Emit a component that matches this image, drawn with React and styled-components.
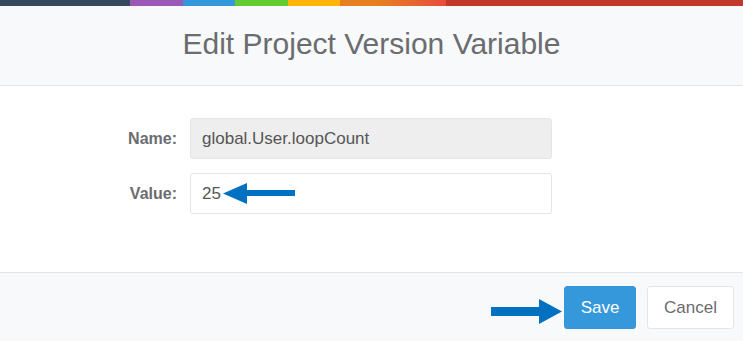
import React from "react";
import styled, { createGlobalStyle } from "styled-components";

const Global = createGlobalStyle`
  html, body { margin: 0; padding: 0; background: #fff; }
  body { font-family: "Liberation Sans", Arial, sans-serif; }
`;

const Page = styled.div`
  width: 743px;
  height: 341px;
  display: flex;
  flex-direction: column;
  overflow: hidden;
`;

const ColorLine = styled.div`
  height: 6px;
  flex: none;
  background: linear-gradient(to right,
    #34495e 0px, #34495e 130px,
    #9b59b6 130px, #9b59b6 183px,
    #3498db 183px, #3498db 235px,
    #62cb31 235px, #62cb31 288px,
    #ffb606 288px, #ffb606 340px,
    #e67e22 340px, #e67e22 380px,
    #e74c3c 446px,
    #c0392b 446px, #c0392b 743px);
`;

const Header = styled.div`
  height: 79px;
  flex: none;
  background: #f7f9fa;
  border-bottom: 1px solid #e4e5e7;
  display: flex;
  align-items: center;
  justify-content: center;
`;

const Title = styled.h4`
  margin: 0 0 3px 0;
  font-weight: 400;
  font-size: 30px;
  color: #6a6c6f;
`;

const Body = styled.div`
  flex: 1;
  background: #fff;
  padding: 32px 0 0 0;
  display: flex;
  flex-direction: column;
  gap: 14px;
`;

const Row = styled.div`
  display: grid;
  grid-template-columns: 177px 362px;
  column-gap: 13px;
  align-items: center;
`;

const Label = styled.label`
  text-align: right;
  font-weight: 700;
  font-size: 16px;
  color: #6a6c6f;
`;

const Field = styled.div`
  position: relative;
  height: 41px;
  box-sizing: border-box;
  border: 1px solid #e4e5e7;
  border-radius: 3px;
  background: ${(p) => (p.$disabled ? "#eeeeee" : "#fff")};
  display: flex;
  align-items: center;
  padding-left: 11px;
  font-size: 17px;
  color: #555;
`;

const Footer = styled.div`
  height: 69px;
  flex: none;
  background: #f7f9fa;
  border-top: 1px solid #e4e5e7;
  display: flex;
  align-items: flex-start;
  justify-content: flex-end;
  padding: 13px 9px 0 0;
  box-sizing: border-box;
  gap: 11px;
`;

const Button = styled.button`
  height: 43px;
  box-sizing: border-box;
  border-radius: 3px;
  font-family: "Liberation Sans", Arial, sans-serif;
  font-size: 17px;
  padding: 0;
  cursor: pointer;
  border: 1px solid ${(p) => (p.$primary ? "#3498db" : "#e4e5e7")};
  background: ${(p) => (p.$primary ? "#3498db" : "#fff")};
  color: ${(p) => (p.$primary ? "#fff" : "#6a6c6f")};
  width: ${(p) => p.$w}px;
`;

const ArrowSlot = styled.span`
  display: inline-flex;
  align-items: center;
  margin-left: ${(p) => p.$ml || 0}px;
`;

const FooterArrow = styled.div`
  align-self: center;
  margin-right: -10px;
  margin-top: -4px;
  display: flex;
`;

const LeftArrow = () => (
  <svg width="73" height="21" viewBox="0 0 73 21">
    <polygon points="0,10.5 24,0 24,7 72,7 72,13 24,13 24,21" fill="#0070c0" />
  </svg>
);

const RightArrow = () => (
  <svg width="72" height="25" viewBox="0 0 72 25">
    <polygon points="0,8 48,8 48,0 71,12.5 48,25 48,17 0,17" fill="#0070c0" />
  </svg>
);

export default function App() {
  return (
    <Page>
      <Global />
      <ColorLine />
      <Header>
        <Title>Edit Project Version Variable</Title>
      </Header>
      <Body>
        <Row>
          <Label>Name:</Label>
          <Field $disabled>global.User.loopCount</Field>
        </Row>
        <Row>
          <Label>Value:</Label>
          <Field>
            25
            <ArrowSlot $ml={2}>
              <LeftArrow />
            </ArrowSlot>
          </Field>
        </Row>
      </Body>
      <Footer>
        <FooterArrow>
          <RightArrow />
        </FooterArrow>
        <Button $primary $w={72}>Save</Button>
        <Button $w={87}>Cancel</Button>
      </Footer>
    </Page>
  );
}
